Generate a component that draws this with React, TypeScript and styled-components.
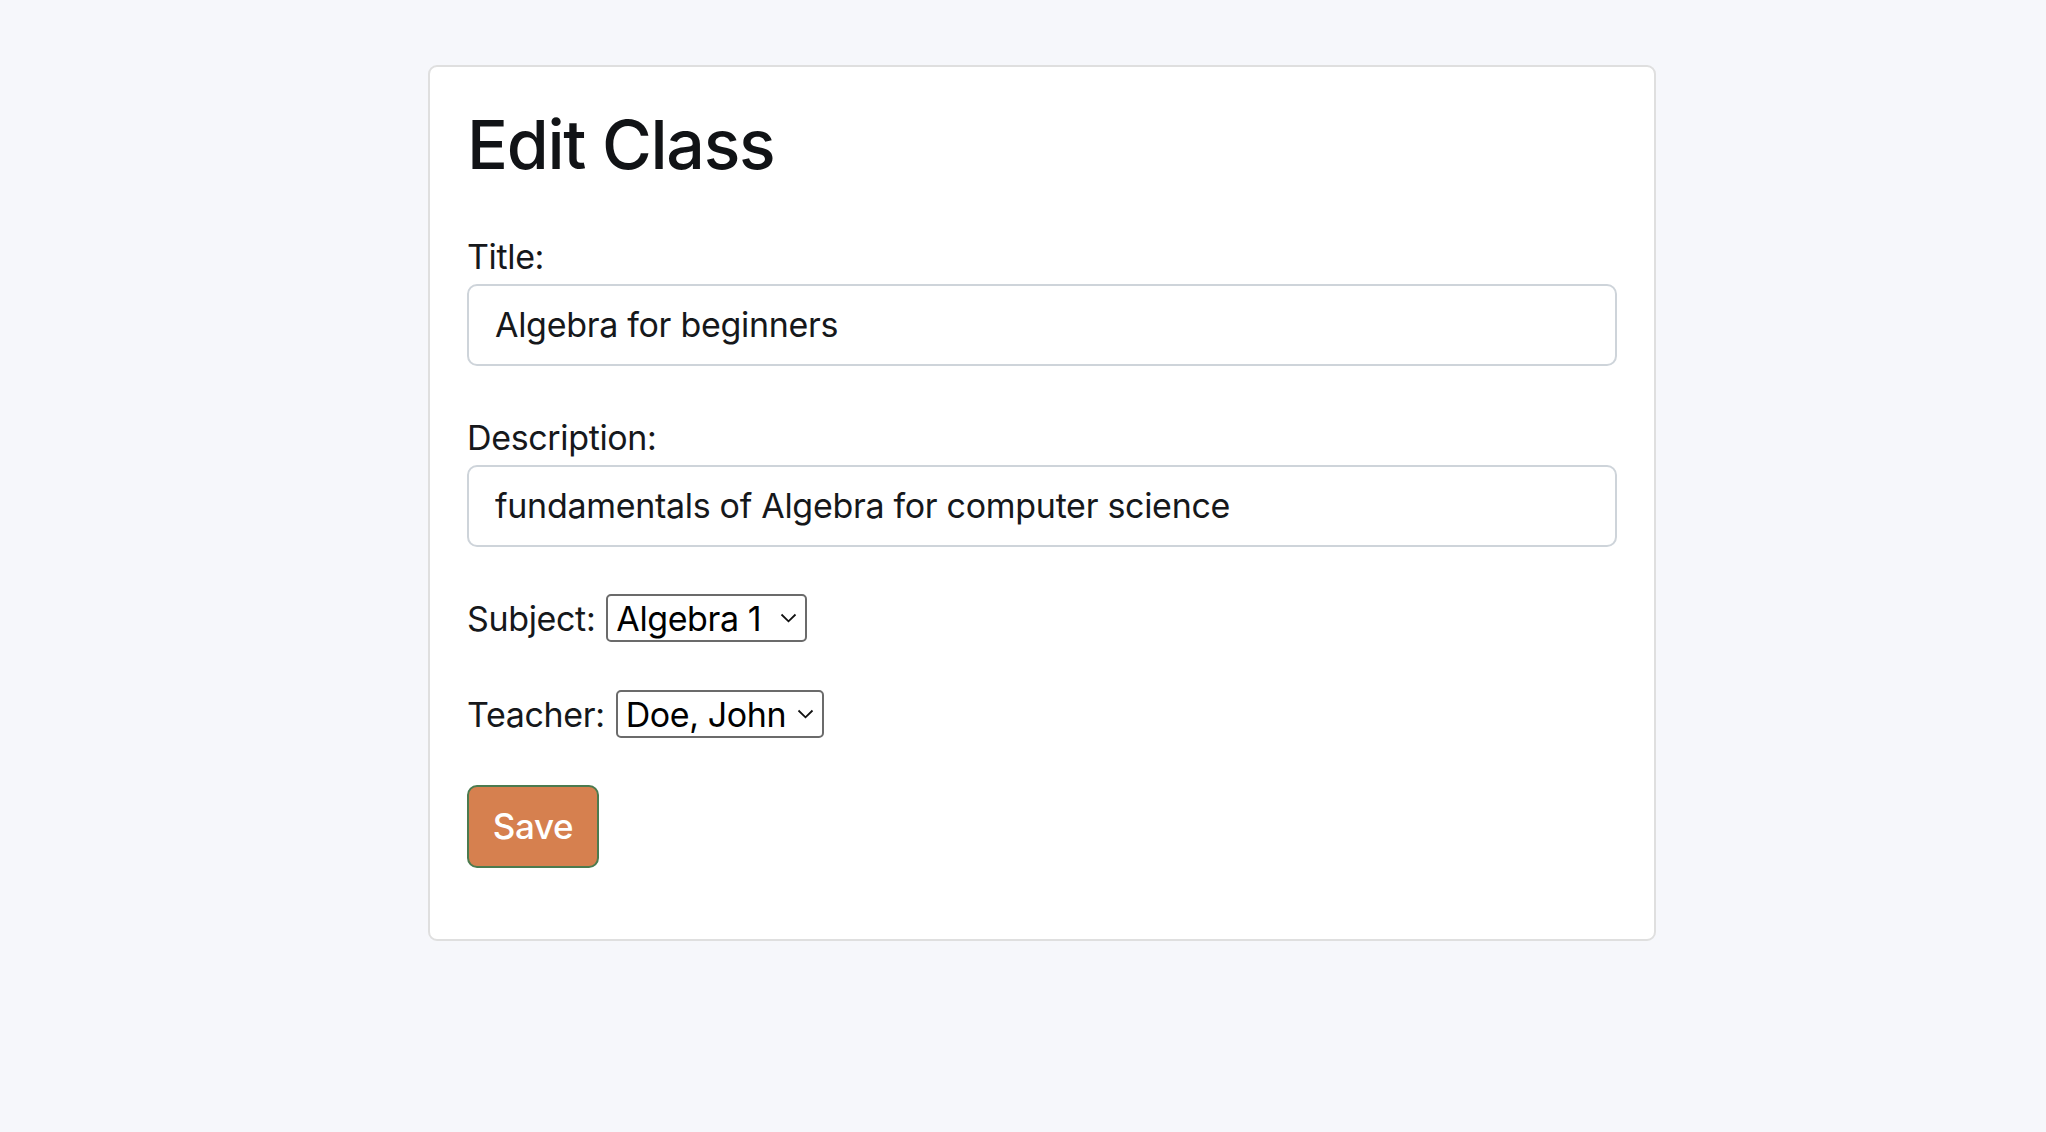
import styled, { createGlobalStyle } from "styled-components";

const GlobalStyle = createGlobalStyle`
  html, body {
    margin: 0;
    background: #f6f7fb;
    font-family: Inter, "Noto Sans", "Liberation Sans", sans-serif;
    color: #16181b;
  }
`;

const Page = styled.div`
  padding: 65px 0 0 428px;
  min-height: 1132px;
  box-sizing: border-box;
`;

const Card = styled.div`
  width: 1228px;
  box-sizing: border-box;
  background: #ffffff;
  border: 2px solid #dfdfdf;
  border-radius: 9px;
  padding: 37px 37px 71px 37px;
`;

const Heading = styled.h2`
  margin: 0 0 45px 0;
  font-size: 68px;
  font-weight: 500;
  line-height: 1.2;
  letter-spacing: -1.3px;
  color: #111316;
`;

const Field = styled.div`
  display: flex;
  flex-direction: column;
  margin-bottom: 46px;
`;

const Label = styled.label`
  font-size: 34px;
  line-height: 51px;
  letter-spacing: -0.35px;
  margin-bottom: 2px;
`;

const TextInput = styled.input`
  height: 82px;
  box-sizing: border-box;
  border: 2px solid #ced4da;
  border-radius: 10px;
  padding: 0 26px;
  font-family: inherit;
  font-size: 34px;
  letter-spacing: -0.3px;
  color: #16181b;
  background: #fff;
  outline: none;
`;

const SelectRow = styled.div`
  display: flex;
  align-items: center;
  gap: 11px;
  height: 51px;
  margin-bottom: 45px;
  font-size: 34px;
  letter-spacing: -0.35px;
`;

const SelectWrap = styled.div<{ $width: number }>`
  position: relative;
  width: ${(p) => p.$width}px;
  height: 48px;
`;

const Select = styled.select`
  appearance: none;
  -webkit-appearance: none;
  width: 100%;
  height: 100%;
  box-sizing: border-box;
  border: 2px solid #6b6b6b;
  border-radius: 5px;
  background: #fff;
  padding: 0 0 0 8px;
  font-family: inherit;
  font-size: 34px;
  letter-spacing: -0.4px;
  color: #000;
  outline: none;
`;

const Chevron = styled.svg`
  position: absolute;
  right: 10px;
  top: 50%;
  transform: translateY(-50%);
  pointer-events: none;
`;

const SaveButton = styled.button`
  width: 132px;
  height: 83px;
  box-sizing: border-box;
  background: #d6804f;
  border: 2px solid #4b7b4f;
  border-radius: 10px;
  color: #fff;
  font-family: inherit;
  font-size: 35px;
  font-weight: 500;
  letter-spacing: -0.3px;
  padding: 0;
  cursor: pointer;
`;

function Dropdown({ value, width }: { value: string; width: number }) {
  return (
    <SelectWrap $width={width}>
      <Select defaultValue={value}>
        <option value={value}>{value}</option>
      </Select>
      <Chevron width="17" height="10" viewBox="0 0 17 10" fill="none">
        <path d="M1.5 1.5 L8.5 8.3 L15.5 1.5" stroke="#111" strokeWidth="1.8" />
      </Chevron>
    </SelectWrap>
  );
}

export default function App() {
  return (
    <>
      <GlobalStyle />
      <Page>
        <Card>
          <Heading>Edit Class</Heading>
          <Field>
            <Label>Title:</Label>
            <TextInput defaultValue="Algebra for beginners" />
          </Field>
          <Field>
            <Label>Description:</Label>
            <TextInput defaultValue="fundamentals of Algebra for computer science" />
          </Field>
          <SelectRow>
            <span>Subject:</span>
            <Dropdown value="Algebra 1" width={201} />
          </SelectRow>
          <SelectRow>
            <span>Teacher:</span>
            <Dropdown value="Doe, John" width={208} />
          </SelectRow>
          <SaveButton>Save</SaveButton>
        </Card>
      </Page>
    </>
  );
}
